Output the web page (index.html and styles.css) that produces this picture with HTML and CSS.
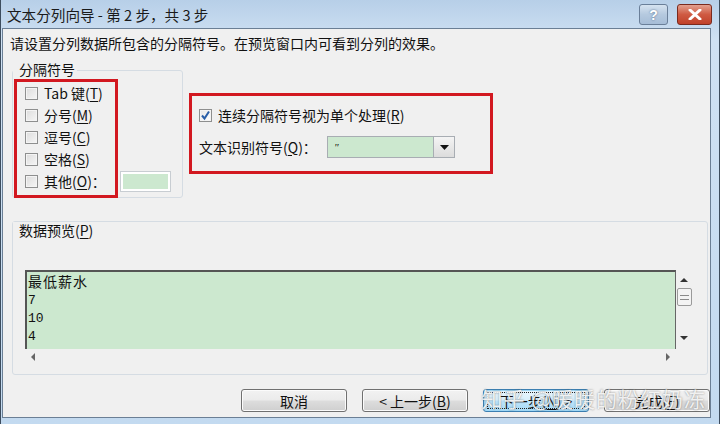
FILE: index.html
```html
<!DOCTYPE html>
<html lang="zh-CN">
<head>
    <meta charset="UTF-8">
    <title>文本分列向导</title>
    <link rel="stylesheet" href="styles.css">
</head>
<body>
    <div class="window">
        <div class="titlebar">
            <span class="title">文本分列向导 - 第 2 步，共 3 步</span>
            <div class="caption-buttons">
                <button class="cap help">?</button>
                <button class="cap close">
                    <svg width="14" height="11" viewBox="0 0 14 11"><path d="M2 1 L12 10 M12 1 L2 10" stroke="#fff" stroke-width="3" stroke-linecap="round"/></svg>
                </button>
            </div>
        </div>

        <div class="panel">
            <p class="intro">请设置分列数据所包含的分隔符号。在预览窗口内可看到分列的效果。</p>

            <div class="top-row">
                <div class="group sep-group">
                    <span class="legend sep-legend">分隔符号</span>
                    <div class="group-body">
                        <div class="red-box sep-list">
                            <label class="check-row"><span class="box"></span>Tab 键(<u>T</u>)</label>
                            <label class="check-row"><span class="box"></span>分号(<u>M</u>)</label>
                            <label class="check-row"><span class="box"></span>逗号(<u>C</u>)</label>
                            <label class="check-row"><span class="box"></span>空格(<u>S</u>)</label>
                            <label class="check-row"><span class="box"></span>其他(<u>O</u>)：</label>
                        </div>
                        <div class="other-input"></div>
                    </div>
                </div>

                <div class="red-box options">
                    <label class="check-row">
                        <span class="box checked">
                            <svg width="11" height="11" viewBox="0 0 11 11"><path d="M2 5.5 L4.5 8.5 L9 1.5" fill="none" stroke="#2a5fa8" stroke-width="2"/></svg>
                        </span>连续分隔符号视为单个处理(<u>R</u>)
                    </label>
                    <div class="qualifier">
                        <span class="q-label">文本识别符号(<u>Q</u>)：</span>
                        <div class="combo">
                            <span class="combo-value">"</span>
                            <span class="combo-btn">
                                <svg width="9" height="5" viewBox="0 0 9 5"><path d="M0 0 H9 L4.5 5 Z" fill="#111"/></svg>
                            </span>
                        </div>
                    </div>
                </div>
            </div>

            <div class="group preview-group">
                <span class="legend">数据预览(<u>P</u>)</span>
                <div class="preview-wrap">
                    <div class="preview-row">
                        <div class="preview">
                            <div class="cjk">最低薪水</div>
                            <div>7</div>
                            <div>10</div>
                            <div>4</div>
                        </div>
                        <div class="vscroll">
                            <span class="arrow up"></span>
                            <span class="thumb"></span>
                            <span class="arrow down"></span>
                        </div>
                    </div>
                    <div class="hscroll">
                        <span class="arrow left"></span>
                        <span class="arrow right"></span>
                    </div>
                </div>
            </div>

            <div class="buttons">
                <button class="btn">取消</button>
                <button class="btn">&lt; 上一步(<u>B</u>)</button>
                <button class="btn focused"><span class="focus-ring">下一步(<u>N</u>) &gt;</span></button>
                <button class="btn">完成(<u>F</u>)</button>
                <span class="watermark">知乎 @暖暖的粉红奶冻</span>
            </div>
        </div>
    </div>
</body>
</html>
```

FILE: styles.css
```css
* {
    margin: 0;
    padding: 0;
    box-sizing: border-box;
}

body {
    width: 720px;
    height: 424px;
    overflow: hidden;
    font-family: "Noto Sans CJK SC", "Liberation Sans", sans-serif;
    font-size: 14px;
    line-height: 19px;
    color: #111;
    background: #c9def2;
}

u {
    text-decoration: underline;
    text-underline-offset: 2px;
}

/* Window frame */
.window {
    height: 424px;
    display: flex;
    flex-direction: column;
    border-left: 1px solid #3d4d5e;
    border-right: 1px solid #3d4d5e;
    background: linear-gradient(#b7cfe8, #cfe1f3 40px, #c3daf0);
    padding: 0 8px 6px 1px;
}

.titlebar {
    height: 28px;
    display: flex;
    align-items: center;
    justify-content: space-between;
    padding-left: 5px;
}

.title {
    font-size: 14.6px;
    color: #1a1a1a;
}

.caption-buttons {
    display: flex;
    gap: 9px;
    margin-right: -1px;
    align-self: flex-start;
    margin-top: 4px;
}

.cap {
    height: 21px;
    border: 1px solid #6a7f99;
    border-radius: 3px;
    display: flex;
    align-items: center;
    justify-content: center;
}

.help {
    width: 29px;
    background: linear-gradient(#d6e3f0, #b5c9df 50%, #a6bdd7);
    color: #fff;
    font-weight: bold;
    font-size: 14px;
    font-family: "Liberation Sans", sans-serif;
    text-shadow: 0 0 2px #4d6480;
}

.close {
    width: 35px;
    border-color: #7a2a1e;
    background: linear-gradient(#e3a08f, #cf5a42 50%, #c0412a);
}

/* Main panel */
.panel {
    flex: 1;
    background: #f0f0f0;
    border: 1px solid #6b7f95;
    position: relative;
    padding: 0 0 0 9px;
}

.intro {
    margin: 5px 0 0 -2px;
    line-height: 18px;
}

.top-row {
    display: flex;
    align-items: flex-start;
    margin-top: 18px;
}

.group {
    border: 1px solid #d5dce3;
    border-radius: 3px;
}

.legend {
    display: inline-block;
    background: #f0f0f0;
    padding: 0 2px 0 6px;
    line-height: 16px;
    margin-top: -9px;
    position: relative;
    top: -1px;
}

.sep-legend {
    position: static;
    align-self: flex-start;
    margin-top: -10px;
}

.sep-group {
    width: 171px;
    height: 128px;
    display: flex;
    flex-direction: column;
}

.group-body {
    display: flex;
    align-items: flex-end;
    margin: 2px 0 0 1px;
}

.red-box {
    border: 3px solid #d21820;
}

.sep-list {
    width: 104px;
    padding: 0 0 3px 8px;
    margin-bottom: -1px;
}

.check-row {
    display: flex;
    align-items: center;
    height: 22px;
    white-space: nowrap;
}

.box {
    width: 13px;
    height: 13px;
    border: 1px solid #8e8f8f;
    background: linear-gradient(135deg, #dcdcdc, #f6f6f6);
    box-shadow: inset 0 0 0 1px #f4f4f4;
    margin-right: 6px;
    display: flex;
    align-items: center;
    justify-content: center;
    flex-shrink: 0;
}

.box.checked {
    background: linear-gradient(135deg, #e6e6e6, #ffffff);
}

.other-input {
    width: 51px;
    height: 21px;
    margin: 0 0 5px 2px;
    border: 1px solid #c8cdd2;
    background: #cce8cf;
    box-shadow: inset 0 0 0 2px #fff;
}

.options {
    width: 304px;
    height: 81px;
    margin: 23px 0 0 6px;
    padding: 8px 0 0 7px;
}

.options .check-row {
    height: 22px;
}

.qualifier {
    display: flex;
    align-items: center;
    margin-top: 10px;
}

.q-label {
    width: 128px;
}

.combo {
    width: 128px;
    height: 22px;
    border: 1px solid #a8adb3;
    background: #cce8cf;
    display: flex;
    justify-content: space-between;
    align-items: stretch;
}

.combo-value {
    font-family: "Liberation Serif", serif;
    font-style: italic;
    font-size: 11px;
    padding: 1px 0 0 6px;
}

.combo-btn {
    width: 21px;
    border-left: 1px solid #a8adb3;
    background: linear-gradient(#f4f4f4, #dcdcdc);
    display: flex;
    align-items: center;
    justify-content: center;
}

/* Preview */
.preview-group {
    width: 696px;
    height: 154px;
    margin-top: 23px;
}

.preview-wrap {
    margin: 29px 0 0 12px;
    width: 667px;
}

.preview-row {
    display: flex;
}

.preview {
    width: 651px;
    height: 79px;
    background: #cce8cf;
    border-top: 2px solid #555;
    border-left: 2px solid #555;
    border-right: 1px solid #666;
    font-family: "Liberation Mono", "Noto Sans CJK SC", monospace;
    font-size: 13px;
    line-height: 18px;
    padding-left: 1px;
    overflow: hidden;
}

.preview .cjk {
    font-family: "Noto Sans CJK SC", sans-serif;
    font-size: 14px;
    letter-spacing: 1px;
    margin-bottom: 2px;
}

.vscroll {
    width: 16px;
    display: flex;
    flex-direction: column;
    align-items: center;
    padding-top: 8px;
}

.thumb {
    width: 15px;
    height: 18px;
    margin: 6px 0 0 1px;
    border: 1px solid #9a9a9a;
    border-radius: 2px;
    background: repeating-linear-gradient(#f3f3f3 0 3px, #8a8a8a 3px 4px);
    background-size: 9px 11px;
    background-position: center;
    background-repeat: no-repeat;
    background-color: #f3f3f3;
}

.arrow {
    width: 0;
    height: 0;
    border: 4px solid transparent;
}

.arrow.up {
    border-bottom-color: #333;
    border-top-width: 0;
}

.arrow.down {
    border-top-color: #333;
    border-bottom-width: 0;
    margin-top: auto;
    margin-bottom: 9px;
}

.hscroll {
    width: 651px;
    height: 16px;
    display: flex;
    justify-content: space-between;
    align-items: center;
    padding: 0 6px 0 6px;
}

.arrow.left {
    border-right-color: #666;
    border-left-width: 0;
}

.arrow.right {
    border-left-color: #666;
    border-right-width: 0;
}

/* Buttons */
.buttons {
    display: flex;
    gap: 15px;
    justify-content: flex-end;
    margin: 14px 0 0 0;
    width: 698px;
    position: relative;
}

.btn {
    width: 106px;
    height: 23px;
    border: 1px solid #707070;
    border-radius: 3px;
    background: linear-gradient(#f2f2f2, #ebebeb 48%, #dddddd 52%, #cfcfcf);
    font-family: inherit;
    font-size: 14px;
    color: #111;
    box-shadow: inset 0 0 0 1px #fbfbfb;
}

.btn.focused {
    border-color: #3c7fb1;
    background: linear-gradient(#eaf6fd, #d9f0fc 48%, #bee6fd 52%, #a7d9f5);
    box-shadow: inset 0 0 0 1px #9fd7f5;
    padding: 2px 3px;
}

.focus-ring {
    display: flex;
    height: 100%;
    align-items: center;
    justify-content: center;
    border: 1px dotted #222;
}

.watermark {
    position: absolute;
    right: 4px;
    top: -6px;
    font-size: 21px;
    line-height: 30px;
    color: rgba(255, 255, 255, 0.85);
    text-shadow: 0 0 2px rgba(60, 60, 60, 0.6);
    letter-spacing: 1px;
    pointer-events: none;
}
```
